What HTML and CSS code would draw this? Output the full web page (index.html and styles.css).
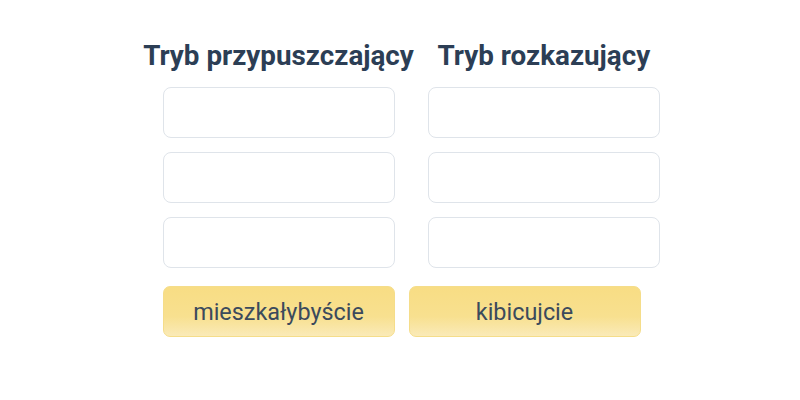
FILE: index.html
```html
<!DOCTYPE html>
<html lang="pl">
<head>
  <meta charset="UTF-8">
  <title>Tryby</title>
  <link rel="stylesheet" href="styles.css">
</head>
<body>
<div class="exercise">

  <div class="columns">
    <div class="col">
      <div class="col-title">Tryb przypuszczający</div>
      <div class="slot"></div>
      <div class="slot"></div>
      <div class="slot"></div>
    </div>
    <div class="col">
      <div class="col-title">Tryb rozkazujący</div>
      <div class="slot"></div>
      <div class="slot"></div>
      <div class="slot"></div>
    </div>
  </div>

  <div class="words">
    <button class="word">mieszkałybyście</button>
    <button class="word">kibicujcie</button>
  </div>

</div>
</body>
</html>
```

FILE: styles.css
```css
*{ box-sizing:border-box; }
html,body{
  margin:0; padding:0;
  background:#fff;
  font-family:Roboto, "Liberation Sans", sans-serif;
}

.exercise{
  padding:37px 0 0 3px;
  display:flex; flex-direction:column; align-items:center;
}

/* ============ COLUMNS ============ */
.columns{
  display:flex; gap:14px;
}
.col{
  display:flex; flex-direction:column; align-items:center;
  gap:14px;
}
.col-title{
  font-size:27.8px;
  font-weight:700;
  color:#2c3e55;
  line-height:38px;
  margin-bottom:-2px;
}
.slot{
  width:232px; height:51px;
  border:1.5px solid #dfe4ea;
  border-radius:8px;
  background:#fff;
}

/* ============ WORD BANK ============ */
.words{
  display:flex; gap:14px;
  margin-top:18px;
}
.word{
  width:232px; height:51px;
  border:1px solid #f5dd8a;
  border-radius:7px;
  background:linear-gradient(#f8dd84 0%, #f8e08f 60%, #faeab8 100%);
  color:#3b4a5c;
  font-family:inherit;
  font-size:23.4px;
  cursor:pointer;
}
```
